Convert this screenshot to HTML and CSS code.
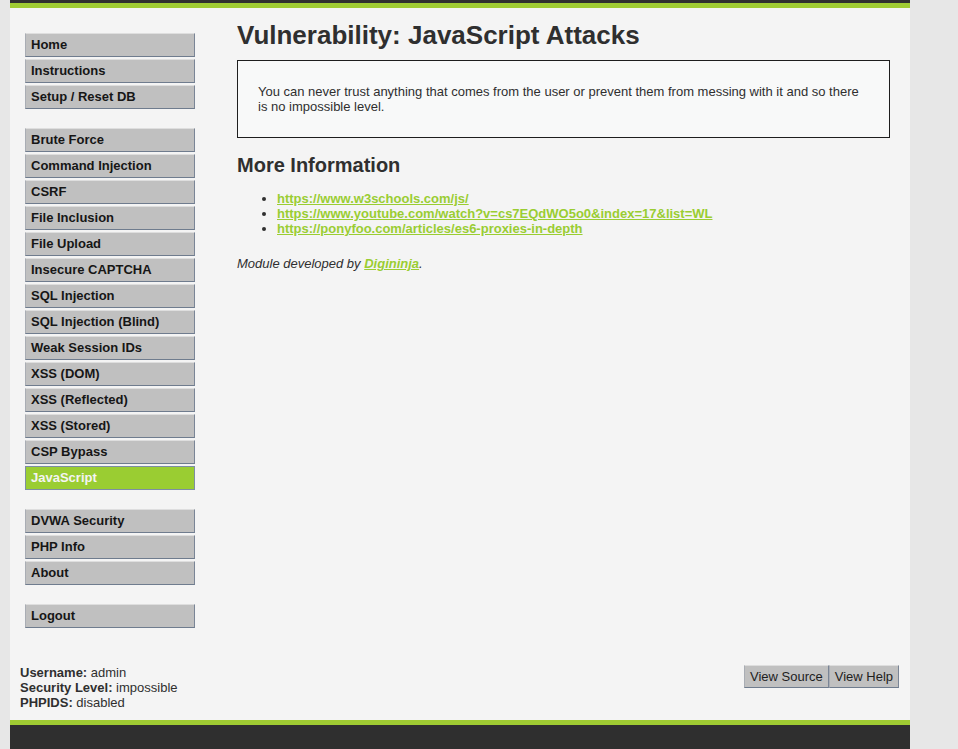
FILE: index.html
```html
<!DOCTYPE html>
<html>
<head>
<meta charset="utf-8">
<title>Vulnerability: JavaScript Attacks</title>
<link rel="stylesheet" href="styles.css">
</head>
<body>
<div class="page">
  <div class="header"></div>
  <div class="content">
    <nav class="menu">
      <ul class="menu-group">
        <li><a href="#">Home</a></li>
        <li><a href="#">Instructions</a></li>
        <li><a href="#">Setup / Reset DB</a></li>
      </ul>
      <ul class="menu-group">
        <li><a href="#">Brute Force</a></li>
        <li><a href="#">Command Injection</a></li>
        <li><a href="#">CSRF</a></li>
        <li><a href="#">File Inclusion</a></li>
        <li><a href="#">File Upload</a></li>
        <li><a href="#">Insecure CAPTCHA</a></li>
        <li><a href="#">SQL Injection</a></li>
        <li><a href="#">SQL Injection (Blind)</a></li>
        <li><a href="#">Weak Session IDs</a></li>
        <li><a href="#">XSS (DOM)</a></li>
        <li><a href="#">XSS (Reflected)</a></li>
        <li><a href="#">XSS (Stored)</a></li>
        <li><a href="#">CSP Bypass</a></li>
        <li class="selected"><a href="#">JavaScript</a></li>
      </ul>
      <ul class="menu-group">
        <li><a href="#">DVWA Security</a></li>
        <li><a href="#">PHP Info</a></li>
        <li><a href="#">About</a></li>
      </ul>
      <ul class="menu-group">
        <li><a href="#">Logout</a></li>
      </ul>
    </nav>
    <main class="main">
      <h1>Vulnerability: JavaScript Attacks</h1>
      <div class="code-area">
        <p>You can never trust anything that comes from the user or prevent them from messing with it and so there is no impossible level.</p>
      </div>
      <h2>More Information</h2>
      <ul class="links">
        <li><a href="#">https://www.w3schools.com/js/</a></li>
        <li><a href="#">https://www.youtube.com/watch?v=cs7EQdWO5o0&amp;index=17&amp;list=WL</a></li>
        <li><a href="#">https://ponyfoo.com/articles/es6-proxies-in-depth</a></li>
      </ul>
      <p class="credit">Module developed by <a href="#">Digininja</a>.</p>
    </main>
  </div>
  <div class="bottom">
    <div class="user-info">
      <div><b>Username:</b> admin</div>
      <div><b>Security Level:</b> impossible</div>
      <div><b>PHPIDS:</b> disabled</div>
    </div>
    <div class="buttons">
      <button class="btn">View Source</button><button class="btn">View Help</button>
    </div>
  </div>
  <div class="footer"></div>
</div>
</body>
</html>
```

FILE: styles.css
```css
html, body {
  margin: 0;
  padding: 0;
  background: #e7e7e7;
  font-family: "Liberation Sans", Arial, sans-serif;
  font-size: 13px;
  line-height: 15px;
  color: #2f2f2f;
  overflow: hidden;
}

.page {
  width: 900px;
  margin-left: 10px;
  background: #f4f4f4;
}

.header {
  height: 3px;
  background: #2f2f2f;
  border-bottom: 5px solid #9fcb33;
}

.content {
  display: flex;
  gap: 42px;
  padding: 0 0 35px 15px;
}

.menu {
  width: 170px;
  flex: none;
  padding-top: 25px;
}

.menu-group {
  list-style: none;
  margin: 0 0 19px 0;
  padding: 0;
}

.menu-group:last-child {
  margin-bottom: 0;
}

.menu-group li {
  margin-bottom: 2px;
}

.menu-group li a {
  display: block;
  padding: 3px 5px 4px 5px;
  line-height: 15px;
  font-weight: bold;
  color: #161616;
  text-decoration: none;
  background: #c0c0c0;
  border-top: 1px solid #dedede;
  border-left: 1px solid #a9adb4;
  border-right: 1px solid #7a8596;
  border-bottom: 1px solid #6f7c8e;
}

.menu-group li.selected a {
  background: #9acd32;
  color: #f4f4f4;
  border-color: #7d8ea3;
}

.main {
  flex: 1;
  padding: 12px 20px 0 0;
}

.main h1 {
  font-size: 26px;
  line-height: 30px;
  margin: 0 0 10px 0;
  font-weight: bold;
}

.code-area {
  border: 1px solid #1e1e1e;
  background: #f8f9f9;
  padding: 23px 30px 23px 20px;
}

.code-area p {
  margin: 0;
}

.main h2 {
  font-size: 20px;
  line-height: 23px;
  margin: 16px 0 14px 0;
  font-weight: bold;
}

.links {
  margin: 0;
  padding-left: 40px;
}

.links a,
.credit a {
  color: #9acd32;
  font-weight: bold;
  text-decoration: underline;
}

.credit {
  margin: 20px 0 0 0;
  font-style: italic;
}

.bottom {
  display: flex;
  justify-content: space-between;
  align-items: flex-start;
  padding: 0 11px 10px 10px;
}

.user-info b {
  font-weight: bold;
}

.buttons {
  display: flex;
}

.btn {
  font-family: "Liberation Sans", Arial, sans-serif;
  font-size: 13px;
  line-height: 15px;
  color: #1e1e1e;
  background: #c0c0c0;
  padding: 3px 5px;
  margin: 0;
  border-top: 1px solid #dedede;
  border-left: 1px solid #a9adb4;
  border-right: 1px solid #7a8596;
  border-bottom: 1px solid #6f7c8e;
  height: 23px;
}

.footer {
  height: 60px;
  background: #2f2f2f;
  border-top: 5px solid #9fcb33;
}
```
